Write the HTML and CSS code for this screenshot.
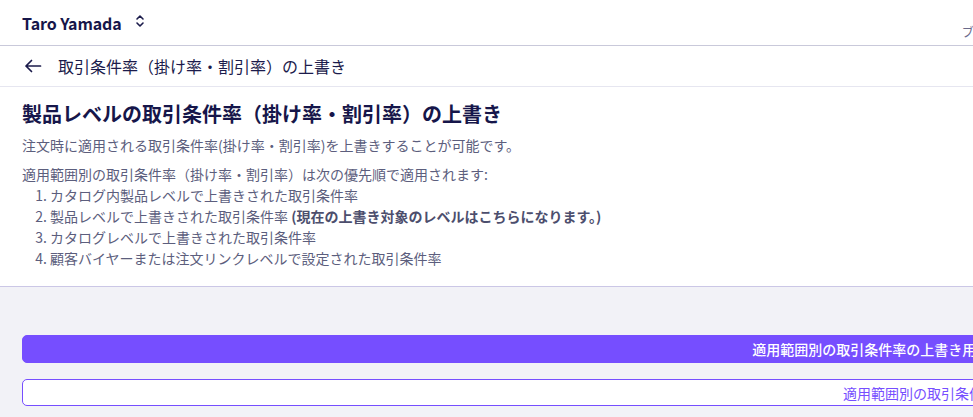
FILE: index.html
```html
<!DOCTYPE html>
<html lang="ja">
<head>
<meta charset="utf-8">
<title>取引条件率の上書き</title>
<link rel="stylesheet" href="styles.css">
</head>
<body>
<div class="page">
  <header class="topbar">
    <div class="account">
      <span class="account-name">Taro Yamada</span>
      <svg class="chevrons" width="10" height="16" viewBox="0 0 10 16" aria-hidden="true">
        <path d="M2 6 L5 3 L8 6" fill="none" stroke="#1b1b4b" stroke-width="1.6" stroke-linecap="round" stroke-linejoin="round"/>
        <path d="M2 10 L5 13 L8 10" fill="none" stroke="#1b1b4b" stroke-width="1.6" stroke-linecap="round" stroke-linejoin="round"/>
      </svg>
    </div>
    <nav class="top-links">
      <span class="top-link">ブランドサイト</span>
    </nav>
  </header>

  <div class="subbar">
    <svg class="back" width="18" height="14" viewBox="0 0 18 14" aria-hidden="true">
      <path d="M16.5 7 H2 M7.5 1.5 L2 7 L7.5 12.5" fill="none" stroke="#1b1b4b" stroke-width="1.7" stroke-linecap="round" stroke-linejoin="round"/>
    </svg>
    <span class="subbar-title">取引条件率（掛け率・割引率）の上書き</span>
  </div>

  <section class="intro">
    <h1 class="intro-title">製品レベルの取引条件率（掛け率・割引率）の上書き</h1>
    <p class="intro-text">注文時に適用される取引条件率(掛け率・割引率)を上書きすることが可能です。</p>
    <div class="priority">
      <p class="priority-lead">適用範囲別の取引条件率（掛け率・割引率）は次の優先順で適用されます:</p>
      <ol class="priority-list">
        <li>カタログ内製品レベルで上書きされた取引条件率</li>
        <li>製品レベルで上書きされた取引条件率 <strong>(現在の上書き対象のレベルはこちらになります。)</strong></li>
        <li>カタログレベルで上書きされた取引条件率</li>
        <li>顧客バイヤーまたは注文リンクレベルで設定された取引条件率</li>
      </ol>
    </div>
  </section>

  <section class="actions">
    <button class="btn btn-primary">適用範囲別の取引条件率の上書き用テンプレートをダウンロード</button>
    <button class="btn btn-outline">適用範囲別の取引条件率の一括登録</button>
  </section>
</div>
</body>
</html>
```

FILE: styles.css
```css
html, body {
  margin: 0;
  padding: 0;
  overflow: hidden;
  background: #f2f2f7;
}

body {
  font-family: "Noto Sans CJK JP", "Noto Sans", sans-serif;
  color: #1b1b4b;
}

.page {
  width: 1910px;
  min-height: 417px;
  background: #f2f2f7;
}

.topbar {
  background: #fff;
  border-bottom: 1px solid #c9c9da;
  display: flex;
  align-items: center;
  padding: 0 22px;
  box-sizing: border-box;
  height: 46px;
}

.account {
  display: flex;
  align-items: center;
  gap: 13px;
}

.account-name {
  font-size: 16px;
  font-weight: 700;
  color: #16164a;
  letter-spacing: -0.1px;
}

.chevrons {
  display: block;
  margin-top: -3px;
}

.top-links {
  margin-left: 817px;
  padding-top: 14px;
}

.top-link {
  font-size: 12px;
  color: #6a6a8a;
}

.subbar {
  height: 40px;
  background: #fff;
  border-bottom: 1px solid #e6e6f0;
  display: flex;
  align-items: center;
  padding: 0 24px;
  gap: 16px;
}

.back {
  display: block;
}

.subbar-title {
  font-size: 16px;
  color: #1b1b4b;
}

.intro {
  background: #fff;
  border-bottom: 1px solid #cbc7e6;
  padding: 13px 22px 17px;
}

.intro-title {
  margin: 0;
  font-size: 20px;
  line-height: 28px;
  font-weight: 700;
  color: #16164a;
}

.intro-text {
  margin: 7px 0 0;
  font-size: 14px;
  line-height: 21px;
  color: #5c5e7d;
}

.priority {
  margin-top: 8px;
  font-size: 14px;
  line-height: 21px;
  color: #5c5e7d;
}

.priority-lead {
  margin: 0;
}

.priority-list {
  margin: 0;
  padding-left: 28px;
}

.priority-list strong {
  font-weight: 700;
  color: #4c4e6d;
}

.actions {
  display: flex;
  flex-direction: column;
  gap: 16px;
  padding: 48px 22px 20px;
}

.btn {
  width: 1866px;
  height: 28px;
  border-radius: 5px;
  font-family: "Noto Sans CJK JP", "Noto Sans", sans-serif;
  font-size: 14px;
  display: flex;
  align-items: center;
  justify-content: center;
  padding: 0;
  cursor: pointer;
}

.btn-primary {
  background: #764eff;
  border: 1px solid #764eff;
  color: #fff;
  font-weight: 500;
}

.btn-outline {
  background: #fff;
  border: 1px solid #764eff;
  color: #764eff;
  height: 27px;
}
```
